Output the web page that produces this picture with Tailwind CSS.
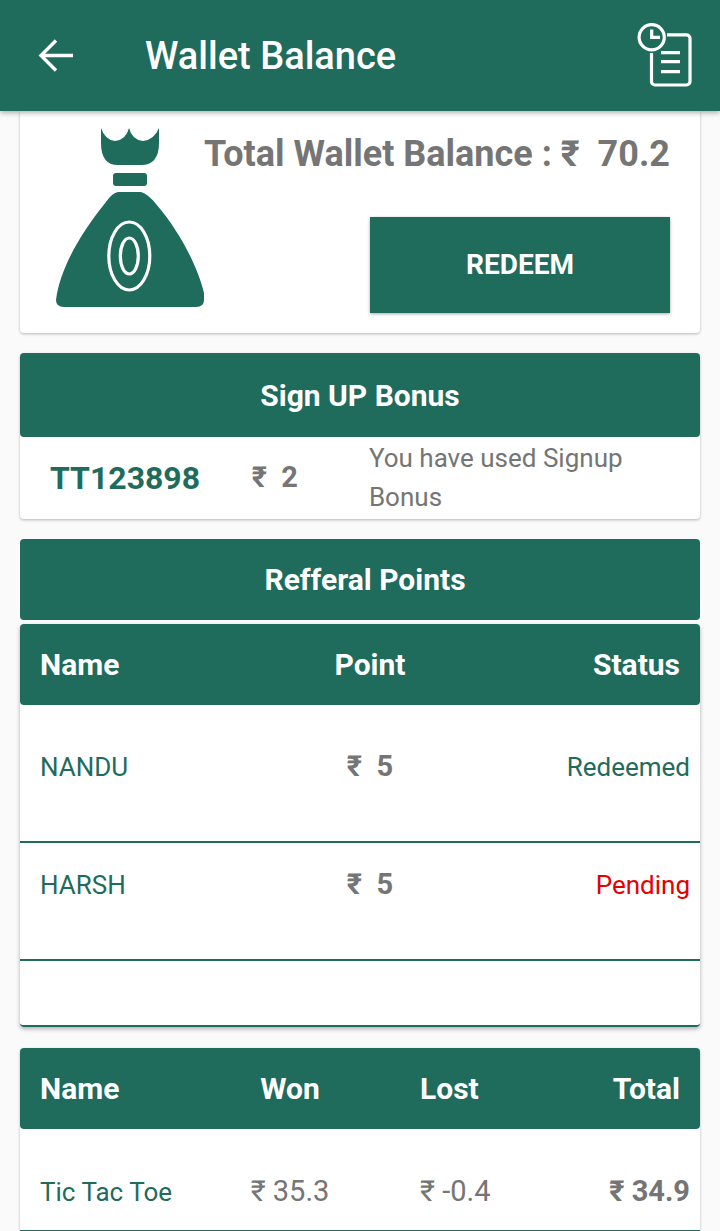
<!DOCTYPE html>
<html lang="en">
<head>
  <meta charset="UTF-8" />
  <title>Wallet Balance</title>
  <script src="https://cdn.jsdelivr.net/npm/@tailwindcss/browser@4"></script>
</head>
<body class="bg-[#fafafa] font-['Roboto','DejaVu_Sans',sans-serif]">
  <div class="h-[1231px] overflow-hidden">
    <!-- App bar -->
    <header class="relative z-10 h-[111px] bg-[#1f6b5c] shadow-[0_2px_5px_rgba(0,0,0,0.3)] flex items-center text-white">
      <svg class="ml-[38px] w-[36px] h-[36px]" viewBox="0 0 36 36" fill="none" stroke="white" stroke-width="3.4">
        <path d="M35 17.5H4M18 2.5L3 17.5L18 32.5" />
      </svg>
      <h1 class="ml-[71px] text-[38px] leading-[44px] font-medium">Wallet Balance</h1>
      <svg class="ml-auto mr-[24px] mb-[2px] w-[60px] h-[70px]" viewBox="0 0 60 70" fill="none" stroke="white" stroke-width="3.2">
        <circle cx="15.7" cy="17.3" r="12.6" />
        <path d="M15.7 9.5V17.3H24" />
        <path d="M31 14.8H50.5A3.5 3.5 0 0 1 54 18.3V61.5A3.5 3.5 0 0 1 50.5 65H19A3.5 3.5 0 0 1 15.5 61.5V33" />
        <path d="M25 32.7H44M25 41.7H44M25 51.7H44" />
      </svg>
    </header>

    <main class="px-[20px]">
      <!-- Balance card -->
      <section class="h-[222px] bg-white rounded-b-[4px] shadow-[0_1px_3px_rgba(0,0,0,0.28)] flex pt-[17px]">
        <svg class="ml-[36px] w-[148px] h-[180px] shrink-0" viewBox="0 0 148 180" fill="#1f6b5c">
          <path d="M45 0Q49 12 59 13Q70 12 73 0Q76 12 87 13Q98 12 103 0V15Q103 37 85 37H62Q45 37 45 15Z" />
          <rect x="57" y="45" width="34" height="13" rx="3" />
          <path fill-rule="evenodd" d="M62 64H85Q92 66 100 76C125 105 142 140 148 165V172Q148 179 140 179H8Q0 179 0 172C4 140 25 105 50 74Q56 65 62 64Z" />
          <ellipse cx="73.3" cy="128" rx="20.5" ry="34" fill="none" stroke="white" stroke-width="3.2" />
          <ellipse cx="73.3" cy="128" rx="9" ry="18" fill="none" stroke="white" stroke-width="3.2" />
        </svg>
        <div class="flex-1 flex flex-col items-end pr-[40px]">
          <p class="mt-[3px] text-[36px] leading-[46px] font-bold text-[#757575] whitespace-pre">Total Wallet Balance : ₹  70.2</p>
          <button class="mt-[40px] w-[300px] h-[96px] bg-[#1f6b5c] text-white text-[28px] font-bold shadow-[0_1px_3px_rgba(0,0,0,0.35)]">REDEEM</button>
        </div>
      </section>

      <!-- Sign up bonus -->
      <section class="mt-[20px] rounded-[4px] bg-white shadow-[0_1px_3px_rgba(0,0,0,0.28)]">
        <h2 class="h-[84px] bg-[#1f6b5c] rounded-[4px] flex items-center justify-center text-white text-[30px] font-bold">Sign UP Bonus</h2>
        <div class="h-[82px] flex items-center">
          <span class="ml-[30px] w-[203px] text-[32px] font-bold text-[#1f6b5c]">TT123898</span>
          <span class="w-[118px] text-[29px] font-bold text-[#757575] whitespace-pre">₹  2</span>
          <span class="text-[26px] text-[#757575]">You have used Signup Bonus</span>
        </div>
      </section>

      <!-- Refferal points -->
      <section class="mt-[20px] h-[81px] bg-[#1f6b5c] rounded-[4px] flex items-center justify-center pl-[10px] text-white text-[30px] font-bold">Refferal Points</section>
      <section class="mt-[4px] rounded-[4px] bg-white shadow-[0_2px_4px_rgba(0,0,0,0.3)]">
        <div class="h-[81px] bg-[#1f6b5c] rounded-[4px] grid grid-cols-[230px_200px_1fr] items-center pl-[20px] pr-[20px] text-white text-[30px] font-bold">
          <span>Name</span><span class="text-center">Point</span><span class="text-right">Status</span>
        </div>
        <div class="h-[138px] border-b-2 border-[#1f6b5c] grid grid-cols-[230px_200px_1fr] pt-[44px] pl-[20px] pr-[10px]">
          <span class="text-[26px] leading-[36px] text-[#1f6b5c]">NANDU</span>
          <span class="text-center text-[29px] leading-[34px] font-bold text-[#757575] whitespace-pre">₹  5</span>
          <span class="text-right text-[26px] leading-[36px] text-[#1f6b5c]">Redeemed</span>
        </div>
        <div class="h-[118px] border-b-2 border-[#1f6b5c] grid grid-cols-[230px_200px_1fr] pt-[24px] pl-[20px] pr-[10px]">
          <span class="text-[26px] leading-[36px] text-[#1f6b5c]">HARSH</span>
          <span class="text-center text-[29px] leading-[34px] font-bold text-[#757575] whitespace-pre">₹  5</span>
          <span class="text-right text-[26px] leading-[36px] text-[#e60000]">Pending</span>
        </div>
        <div class="h-[66px] border-b-2 border-[#1f6b5c] rounded-b-[4px]"></div>
      </section>

      <!-- Game totals -->
      <section class="mt-[21px] rounded-[4px] bg-white shadow-[0_1px_3px_rgba(0,0,0,0.28)]">
        <div class="h-[81px] bg-[#1f6b5c] rounded-[4px] grid grid-cols-[210px_80px_1fr_1fr] items-center px-[20px] text-white text-[30px] font-bold">
          <span>Name</span><span class="text-center">Won</span><span class="ml-[90px]">Lost</span><span class="text-right">Total</span>
        </div>
        <div class="h-[103px] border-b-2 border-[#1f6b5c] grid grid-cols-[210px_80px_1fr_1fr] pt-[44px] pl-[20px] pr-[10px]">
          <span class="text-[26px] leading-[38px] text-[#1f6b5c]">Tic Tac Toe</span>
          <span class="text-center text-[29px] leading-[36px] text-[#757575] whitespace-nowrap">₹ 35.3</span>
          <span class="ml-[90px] text-[29px] leading-[36px] text-[#757575] whitespace-nowrap">₹ -0.4</span>
          <span class="text-right text-[29px] leading-[36px] font-bold text-[#757575] whitespace-nowrap">₹ 34.9</span>
        </div>
      </section>
    </main>
  </div>
</body>
</html>
